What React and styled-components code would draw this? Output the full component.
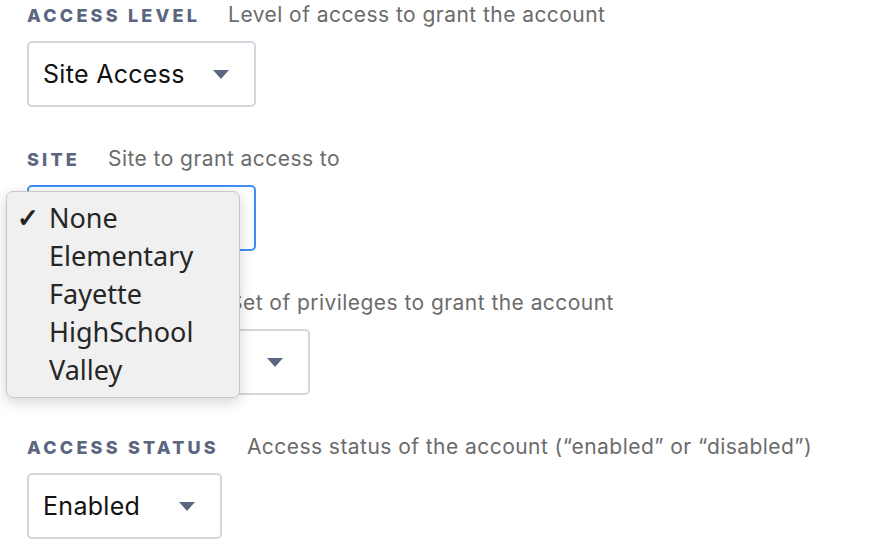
import React from 'react';
import styled, { createGlobalStyle } from 'styled-components';

const GlobalStyle = createGlobalStyle`
   html, body {
      margin: 0;
      padding: 0;
      background: #ffffff;
   }
   body {
      font-family: Inter, "Open Sans", sans-serif;
   }
`;

const Page = styled.div`
   position: relative;
   width: 884px;
   height: 560px;
   overflow: hidden;
   padding: 2px 0 0 27px;
   box-sizing: border-box;
   display: flex;
   flex-direction: column;
`;

const Field = styled.div`
   display: flex;
   flex-direction: column;
   margin-bottom: 39px;
`;

const LabelRow = styled.div`
   display: flex;
   align-items: baseline;
   height: 26px;
   margin-bottom: 13px;
`;

const Label = styled.span`
   font-size: 18px;
   font-weight: 800;
   letter-spacing: 3.2px;
   color: #5b6680;
   margin-right: 28px;
`;

const Description = styled.span`
   font-size: 21px;
   letter-spacing: 0.45px;
   color: #6b6b6b;
`;

const SelectBox = styled.div`
   width: ${p => p.width}px;
   height: 66px;
   box-sizing: border-box;
   border: 2px solid ${p => (p.focused ? '#3d8ef5' : '#d3d6dd')};
   border-radius: 5px;
   display: flex;
   align-items: center;
   justify-content: space-between;
   padding: 0 25px 0 14px;
   font-size: 25px;
   letter-spacing: 0.3px;
   color: #111;
`;

const Arrow = styled.span`
   width: 0;
   height: 0;
   border-left: 8px solid transparent;
   border-right: 8px solid transparent;
   border-top: 9px solid #5b6680;
`;

const Menu = styled.ul`
   position: absolute;
   left: 6px;
   top: 191px;
   width: 234px;
   height: 207px;
   box-sizing: border-box;
   margin: 0;
   padding: 6px 0 0 0;
   list-style: none;
   background: #f0f0f0;
   border: 1px solid #c8c8c8;
   border-radius: 7px;
   box-shadow: 0 4px 14px rgba(0, 0, 0, 0.18);
   font-family: "Noto Sans", "Liberation Sans", sans-serif;
   font-size: 27px;
   color: #262626;
`;

const MenuItem = styled.li`
   display: flex;
   align-items: center;
   height: 38px;
   padding-left: 10px;
`;

const Check = styled.span`
   width: 32px;
   font-size: 26px;
   font-weight: 700;
   color: #222;
`;

const fields = [
   { label: 'ACCESS LEVEL', desc: 'Level of access to grant the account', value: 'Site Access', width: 229 },
   { label: 'SITE', desc: 'Site to grant access to', value: '', width: 229, focused: true },
   { label: 'PRIVILEGE SET', desc: 'Set of privileges to grant the account', value: 'Full Access', width: 283 },
   { label: 'ACCESS STATUS', desc: 'Access status of the account (\u201cenabled\u201d or \u201cdisabled\u201d)', value: 'Enabled', width: 195 }
];

const sites = ['None', 'Elementary', 'Fayette', 'HighSchool', 'Valley'];

const App = () => (
   <Page>
      <GlobalStyle />
      {fields.map(f => (
         <Field key={f.label}>
            <LabelRow>
               <Label>{f.label}</Label>
               <Description>{f.desc}</Description>
            </LabelRow>
            <SelectBox width={f.width} focused={f.focused}>
               <span>{f.value}</span>
               {!f.focused && <Arrow />}
            </SelectBox>
         </Field>
      ))}
      <Menu>
         {sites.map((s, i) => (
            <MenuItem key={s}>
               <Check>{i === 0 ? '\u2713' : ''}</Check>
               {s}
            </MenuItem>
         ))}
      </Menu>
   </Page>
);

export default App;
